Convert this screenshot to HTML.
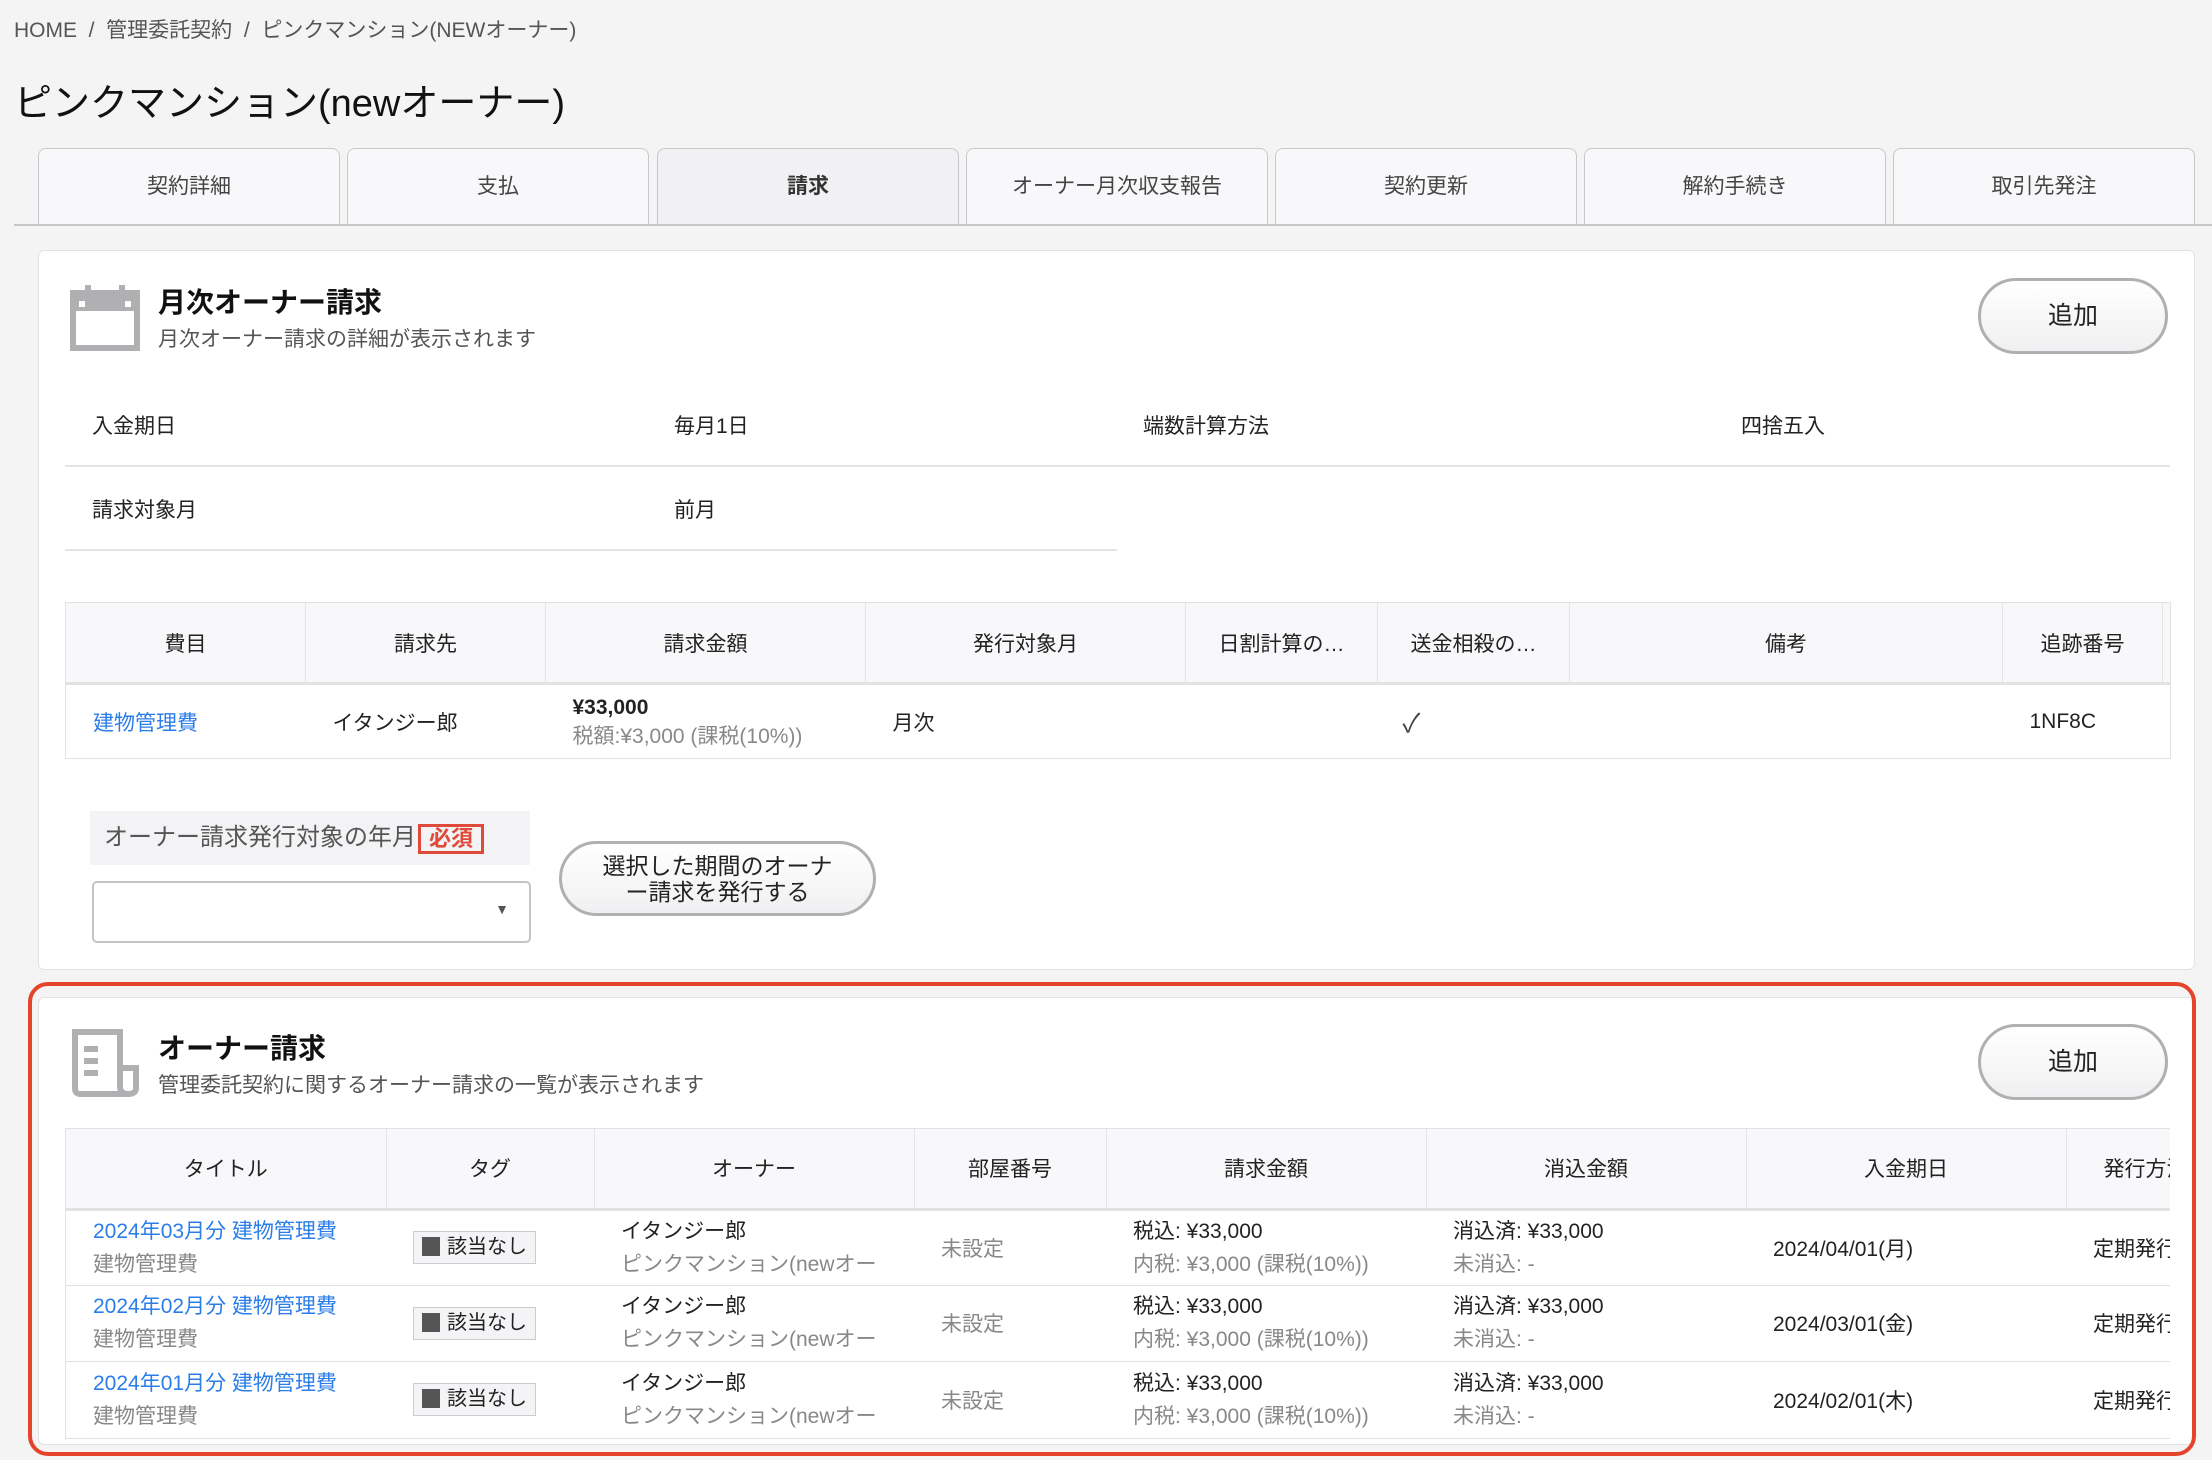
<!DOCTYPE html>
<html><head><meta charset="utf-8"><style>
*{box-sizing:border-box;margin:0;padding:0}
body{width:2212px;height:1460px;background:#f4f4f4;font-family:"Liberation Sans","Noto Sans CJK JP",sans-serif;color:#222;position:relative;overflow:hidden;font-size:21px}
.abs{position:absolute}
.crumb{left:14px;top:14px;font-size:21px;color:#555}
.title{left:14px;top:72px;font-size:38px;color:#111}
.tab{position:absolute;top:148px;height:77px;width:302px;background:#f8f8fa;border:1px solid #c8c8cc;border-bottom:none;border-radius:8px 8px 0 0;text-align:center;line-height:76px;font-size:21px;color:#444}
.tab.on{background:#f1f1f3;font-weight:bold;color:#333}
.tabline{left:14px;top:224px;width:2198px;height:2px;background:#c8c8cc}
.card{position:absolute;left:38px;width:2157px;background:#fff;border:1px solid #e2e2e2;border-radius:6px}
.h{font-size:28px;font-weight:bold;color:#111}
.sub{font-size:21px;color:#555}
.btn{position:absolute;border:3px solid #b0b0b0;border-radius:40px;background:linear-gradient(#fff,#f0f0f2);text-align:center;font-size:25px;color:#222}
table{border-collapse:collapse;table-layout:fixed;position:absolute}
th{background:#f8f8fa;font-weight:normal;font-size:21px;color:#222;border-right:1px solid #e4e4e4;border-bottom:3px solid #e2e2e2;text-align:center}
td{font-size:21px;border-top:1px solid #e2e2e2;vertical-align:middle}
.link{color:#2b7de9}
.g{color:#888}
.tag{display:inline-block;border:1px solid #ccc;background:#f4f4f6;padding:3px 8px;font-size:20px;line-height:25px}
.tag i{display:inline-block;width:18px;height:19px;background:#555;vertical-align:-3px;margin-right:7px}
</style></head><body>
<div class="abs crumb">HOME &nbsp;/&nbsp; 管理委託契約 &nbsp;/&nbsp; ピンクマンション(NEWオーナー)</div>
<div class="abs title">ピンクマンション(newオーナー)</div>
<div class="tab" style="left:38px">契約詳細</div>
<div class="tab" style="left:347px">支払</div>
<div class="tab on" style="left:657px">請求</div>
<div class="tab" style="left:966px">オーナー月次収支報告</div>
<div class="tab" style="left:1275px">契約更新</div>
<div class="tab" style="left:1584px">解約手続き</div>
<div class="tab" style="left:1893px">取引先発注</div>
<div class="abs tabline"></div>

<div class="card" style="top:250px;height:720px"></div>
<svg class="abs" style="left:70px;top:283px" width="70" height="68" viewBox="0 0 70 68"><rect x="3" y="10" width="64" height="55" fill="none" stroke="#b0b0b2" stroke-width="6"/><rect x="3" y="10" width="64" height="18" fill="#b0b0b2"/><rect x="15" y="2" width="6" height="16" fill="#b0b0b2"/><rect x="49" y="2" width="6" height="16" fill="#b0b0b2"/><rect x="9" y="18" width="6" height="6" fill="#fff"/><rect x="55" y="18" width="6" height="6" fill="#fff"/></svg>
<div class="abs h" style="left:158px;top:281px">月次オーナー請求</div>
<div class="abs sub" style="left:158px;top:323px">月次オーナー請求の詳細が表示されます</div>
<div class="btn" style="left:1978px;top:278px;width:190px;height:76px;line-height:70px">追加</div>
<div class="abs" style="left:92px;top:410px">入金期日</div>
<div class="abs" style="left:674px;top:410px">毎月1日</div>
<div class="abs" style="left:1143px;top:410px">端数計算方法</div>
<div class="abs" style="left:1741px;top:410px">四捨五入</div>
<div class="abs" style="left:65px;top:465px;width:2105px;height:2px;background:#e4e4e4"></div>
<div class="abs" style="left:92px;top:494px">請求対象月</div>
<div class="abs" style="left:674px;top:494px">前月</div>
<div class="abs" style="left:65px;top:549px;width:1052px;height:2px;background:#e4e4e4"></div>

<table style="left:65px;top:602px;width:2105px;border:1px solid #e2e2e2">
<colgroup><col style="width:240px"><col style="width:240px"><col style="width:320px"><col style="width:320px"><col style="width:192px"><col style="width:192px"><col style="width:433px"><col style="width:160px"><col style="width:8px"></colgroup>
<tr style="height:81px"><th>費目</th><th>請求先</th><th>請求金額</th><th>発行対象月</th><th>日割計算の…</th><th>送金相殺の…</th><th>備考</th><th>追跡番号</th><th style="border-right:none"></th></tr>
<tr style="height:75px"><td style="padding-left:27px" class="link">建物管理費</td><td style="padding-left:27px">イタンジー郎</td><td style="padding-left:27px;line-height:29px"><b>¥33,000</b><br><span class="g">税額:¥3,000 (課税(10%))</span></td><td style="padding-left:27px">月次</td><td></td><td style="padding-left:25px;font-size:26px;color:#444">✓</td><td></td><td style="padding-left:27px">1NF8C</td><td></td></tr>
</table>

<div class="abs" style="left:90px;top:811px;width:440px;height:54px;background:#f3f3f5;color:#555;font-size:24px;line-height:54px;padding-left:14px">オーナー請求発行対象の年月<span style="display:inline-block;border:3px solid #e04a3a;color:#e04a3a;font-weight:bold;font-size:22px;line-height:24px;padding:0 8px;margin-left:2px;vertical-align:middle">必須</span></div>
<div class="abs" style="left:92px;top:881px;width:439px;height:62px;border:2px solid #c4c4c4;border-radius:5px;background:#fff"><span style="position:absolute;right:20px;top:18px;font-size:14px;color:#555">▼</span></div>
<div class="btn" style="left:559px;top:841px;width:317px;height:75px;font-size:23px;line-height:26px;padding-top:9px">選択した期間のオーナ<br>ー請求を発行する</div>

<div class="card" style="top:997px;height:448px"></div>
<svg class="abs" style="left:70px;top:1028px" width="70" height="70" viewBox="0 0 70 70"><path d="M5 4 H50 V58 Q50 66 58 66 H10 Q5 66 5 60 Z" fill="none" stroke="#b0b0b2" stroke-width="6"/><path d="M50 40 H66 V60 Q66 66 58 66" fill="none" stroke="#b0b0b2" stroke-width="6"/><rect x="14" y="18" width="14" height="6" fill="#b0b0b2"/><rect x="14" y="30" width="14" height="6" fill="#b0b0b2"/><rect x="14" y="42" width="14" height="6" fill="#b0b0b2"/></svg>
<div class="abs h" style="left:158px;top:1027px">オーナー請求</div>
<div class="abs sub" style="left:158px;top:1069px">管理委託契約に関するオーナー請求の一覧が表示されます</div>
<div class="btn" style="left:1978px;top:1024px;width:190px;height:76px;line-height:70px">追加</div>

<div class="abs" style="left:65px;top:1128px;width:2105px;height:312px;overflow:hidden;border-left:1px solid #e2e2e2;border-top:1px solid #e2e2e2">
<table style="left:0;top:0;width:2240px">
<colgroup><col style="width:320px"><col style="width:208px"><col style="width:320px"><col style="width:192px"><col style="width:320px"><col style="width:320px"><col style="width:320px"><col style="width:240px"></colgroup>
<tr style="height:80px"><th>タイトル</th><th>タグ</th><th>オーナー</th><th>部屋番号</th><th>請求金額</th><th>消込金額</th><th>入金期日</th><th style="text-align:left;padding-left:37px">発行方法</th></tr>
<tr style="height:76px"><td style="padding-left:27px;line-height:33px"><span class="link">2024年03月分 建物管理費</span><br><span class="g">建物管理費</span></td><td style="padding-left:27px"><span class="tag"><i></i>該当なし</span></td><td style="padding-left:27px;line-height:33px;white-space:nowrap;overflow:hidden">イタンジー郎<br><span class="g">ピンクマンション(newオー</span></td><td style="padding-left:27px" class="g">未設定</td><td style="padding-left:27px;line-height:33px">税込: ¥33,000<br><span class="g">内税: ¥3,000 (課税(10%))</span></td><td style="padding-left:27px;line-height:33px">消込済: ¥33,000<br><span class="g">未消込: -</span></td><td style="padding-left:27px">2024/04/01(月)</td><td style="padding-left:27px">定期発行</td></tr>
<tr style="height:76px"><td style="padding-left:27px;line-height:33px"><span class="link">2024年02月分 建物管理費</span><br><span class="g">建物管理費</span></td><td style="padding-left:27px"><span class="tag"><i></i>該当なし</span></td><td style="padding-left:27px;line-height:33px;white-space:nowrap;overflow:hidden">イタンジー郎<br><span class="g">ピンクマンション(newオー</span></td><td style="padding-left:27px" class="g">未設定</td><td style="padding-left:27px;line-height:33px">税込: ¥33,000<br><span class="g">内税: ¥3,000 (課税(10%))</span></td><td style="padding-left:27px;line-height:33px">消込済: ¥33,000<br><span class="g">未消込: -</span></td><td style="padding-left:27px">2024/03/01(金)</td><td style="padding-left:27px">定期発行</td></tr>
<tr style="height:77px"><td style="padding-left:27px;line-height:33px"><span class="link">2024年01月分 建物管理費</span><br><span class="g">建物管理費</span></td><td style="padding-left:27px"><span class="tag"><i></i>該当なし</span></td><td style="padding-left:27px;line-height:33px;white-space:nowrap;overflow:hidden">イタンジー郎<br><span class="g">ピンクマンション(newオー</span></td><td style="padding-left:27px" class="g">未設定</td><td style="padding-left:27px;line-height:33px">税込: ¥33,000<br><span class="g">内税: ¥3,000 (課税(10%))</span></td><td style="padding-left:27px;line-height:33px">消込済: ¥33,000<br><span class="g">未消込: -</span></td><td style="padding-left:27px">2024/02/01(木)</td><td style="padding-left:27px">定期発行</td></tr>
<tr style="height:2px"><td colspan="8" style="border-top:1px solid #e2e2e2"></td></tr>
</table></div>
<div class="abs" style="left:28px;top:982px;width:2168px;height:474px;border:4px solid #e5432c;border-radius:20px"></div>
</body></html>
